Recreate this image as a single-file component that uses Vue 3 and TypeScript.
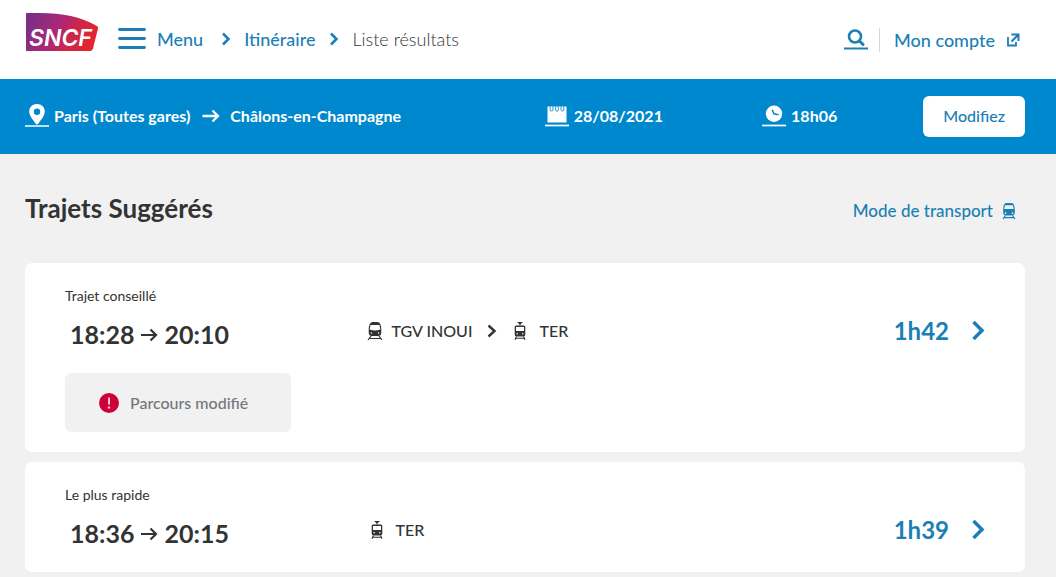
<script setup lang="ts">
type Mode = 'tgv' | 'ter'

interface Leg {
  mode: Mode
  label: string
}

interface Journey {
  id: number
  tag: string
  departure: string
  arrival: string
  legs: Leg[]
  duration: string
  notice?: string
}

const journeys: Journey[] = [
  {
    id: 1,
    tag: 'Trajet conseillé',
    departure: '18:28',
    arrival: '20:10',
    legs: [
      { mode: 'tgv', label: 'TGV INOUI' },
      { mode: 'ter', label: 'TER' },
    ],
    duration: '1h42',
    notice: 'Parcours modifié',
  },
  {
    id: 2,
    tag: 'Le plus rapide',
    departure: '18:36',
    arrival: '20:15',
    legs: [{ mode: 'ter', label: 'TER' }],
    duration: '1h39',
  },
]
</script>

<template>
  <div class="page">
    <header class="header">
      <a class="logo" href="#" aria-label="SNCF">
        <svg width="74" height="38" viewBox="0 0 74 38">
          <defs>
            <linearGradient id="brand" x1="0" y1="0.3" x2="1" y2="0.6">
              <stop offset="0" stop-color="#7a2f86" />
              <stop offset="0.4" stop-color="#a82878" />
              <stop offset="0.7" stop-color="#cf2647" />
              <stop offset="1" stop-color="#e5252b" />
            </linearGradient>
          </defs>
          <path d="M1 0H14C38 0 56 4 71 12.500Q73.500 13.500 73 15.500L68 35.500Q67.300 38 65 38H1Z" fill="url(#brand)" />
          <text x="4" y="33" class="logo-text">SNCF</text>
        </svg>
      </a>

      <nav class="crumbs" aria-label="Fil d'Ariane">
        <button class="menu" type="button">
          <svg width="28" height="22" viewBox="0 0 28 22" class="line">
            <path d="M1.500 1.500H26.500M1.500 10.500H26.500M1.500 19.500H26.500" stroke-width="2.800" stroke-linecap="round" />
          </svg>
          <span>Menu</span>
        </button>
        <svg class="line sep" width="10" height="14" viewBox="0 0 10 14">
          <path d="M2 1.500L7.500 7L2 12.500" stroke-width="2.500" />
        </svg>
        <a href="#">Itinéraire</a>
        <svg class="line sep" width="10" height="14" viewBox="0 0 10 14">
          <path d="M2 1.500L7.500 7L2 12.500" stroke-width="2.500" />
        </svg>
        <span class="current">Liste résultats</span>
      </nav>

      <div class="tools">
        <button class="search" type="button" aria-label="Rechercher">
          <svg class="line" width="24" height="21" viewBox="0 0 24 21">
            <circle cx="11" cy="7.500" r="6" stroke-width="2.600" />
            <path d="M15.500 12L19 15.500" stroke-width="3" stroke-linecap="round" />
            <path d="M0 19.500H24" stroke-width="2" />
          </svg>
        </button>
        <a class="account" href="#">
          <span>Mon compte</span>
          <svg class="line" width="14" height="14" viewBox="0 0 14 14">
            <path d="M2 4V12.500H10V9" stroke-width="1.800" />
            <path d="M5.500 1.500H12.500V8M12 2L5.500 8.500" stroke-width="2" />
          </svg>
        </a>
      </div>
    </header>

    <section class="query" aria-label="Votre recherche">
      <div class="place">
        <svg width="24" height="24" viewBox="0 0 24 24">
          <path fill-rule="evenodd" fill="#fff" d="M12 0C16.500 0 19.800 3.300 19.800 7.600C19.800 12 15.500 16.500 13.500 19.400Q12 21.500 10.500 19.400C8.500 16.500 4.200 12 4.200 7.600C4.200 3.300 7.500 0 12 0ZM12 4.500A3.200 3.200 0 1 0 12 10.900A3.200 3.200 0 1 0 12 4.500Z" />
          <path d="M0 22H24" stroke="#fff" stroke-width="1.500" />
        </svg>
        <span>Paris (Toutes gares)</span>
        <svg class="line" width="18" height="14" viewBox="0 0 18 14">
          <path d="M0.500 7H16M10.500 1.500L16 7L10.500 12.500" stroke-width="2.300" />
        </svg>
        <span>Châlons-en-Champagne</span>
      </div>
      <div class="item">
        <svg width="24" height="22" viewBox="0 0 24 22">
          <path fill="#fff" d="M2.500 1.500H21.500V17.500H2.500Z" />
          <g fill="#fff" stroke="#0088ce" stroke-width="0.900">
            <rect x="5.200" y="1" width="2.800" height="5" rx="1.200" />
            <rect x="10.600" y="1" width="2.800" height="5" rx="1.200" />
            <rect x="16" y="1" width="2.800" height="5" rx="1.200" />
          </g>
          <path d="M0 20.500H24" stroke="#fff" stroke-width="1.700" />
        </svg>
        <span>28/08/2021</span>
      </div>
      <div class="item">
        <svg width="24" height="22" viewBox="0 0 24 22">
          <circle cx="12" cy="8.800" r="8.200" fill="#fff" />
          <path d="M10.200 4.800L11.800 8.800L16.500 9.800" fill="none" stroke="#0088ce" stroke-width="1.500" />
          <path d="M0 20.500H24" stroke="#fff" stroke-width="1.700" />
        </svg>
        <span>18h06</span>
      </div>
      <button class="edit" type="button">Modifiez</button>
    </section>

    <main class="results">
      <div class="heading">
        <h1>Trajets Suggérés</h1>
        <a class="mode" href="#">
          <span>Mode de transport</span>
          <svg width="14" height="18" viewBox="0 0 14 18" fill="currentColor">
            <path fill-rule="evenodd" d="M4 1H10Q12.800 1.500 12.800 8V10.500Q12.800 13.500 10 13.500H4Q1.200 13.500 1.200 10.500V8Q1.200 1.500 4 1ZM3 3.200L2.300 7H11.700L11 3.200ZM3.500 10.200A0.900 0.900 0 1 0 3.500 12A0.900 0.900 0 1 0 3.500 10.200ZM10.500 10.200A0.900 0.900 0 1 0 10.500 12A0.900 0.900 0 1 0 10.500 10.200Z" />
            <path d="M3.500 13.500L1 17M10.500 13.500L13 17M2 15.700H12" stroke="currentColor" stroke-width="1.200" />
          </svg>
        </a>
      </div>

      <ul class="list">
        <li v-for="journey in journeys" :key="journey.id" class="card">
          <div class="when">
            <p class="tag">{{ journey.tag }}</p>
            <p class="times">
              <span>{{ journey.departure }}</span>
              <svg class="line" width="18" height="16" viewBox="0 0 18 16">
                <path d="M1 9H16M10.500 3.500L16 9L10.500 14.500" stroke-width="2.200" />
              </svg>
              <span>{{ journey.arrival }}</span>
            </p>
          </div>

          <div class="legs">
            <template v-for="(leg, index) in journey.legs" :key="index">
              <svg v-if="index > 0" class="line leg-sep" width="10" height="14" viewBox="0 0 10 14">
                <path d="M1.500 1.500L7.500 7L1.500 12.500" stroke-width="2.400" />
              </svg>
              <span class="leg">
                <svg v-if="leg.mode === 'tgv'" width="18" height="20" viewBox="0 0 18 20" fill="currentColor">
                  <path fill-rule="evenodd" d="M6 1H12Q15.300 2 15.300 9V11.500Q15.300 15 12 15H6Q2.700 15 2.700 11.500V9Q2.700 2 6 1ZM4.500 4L3.700 8.500Q9 10.500 14.300 8.500L13.500 4ZM5.400 11.200A0.800 0.800 0 1 0 5.400 12.800A0.800 0.800 0 1 0 5.400 11.200ZM12.600 11.200A0.800 0.800 0 1 0 12.600 12.800A0.800 0.800 0 1 0 12.600 11.200Z" />
                  <path d="M5 15L2 19M13 15L16 19M3.500 17.500H14.500" stroke="currentColor" stroke-width="1.200" />
                </svg>
                <svg v-else width="22" height="20" viewBox="0 0 22 20" fill="currentColor">
                  <path fill-rule="evenodd" d="M7 4.500H15Q16.300 4.500 16.300 6V13.500Q16.300 15.500 14.500 15.500H7.500Q5.700 15.500 5.700 13.500V6Q5.700 4.500 7 4.500ZM7 6V10H15V6ZM8.200 12A0.800 0.800 0 1 0 8.200 13.600A0.800 0.800 0 1 0 8.200 12ZM13.800 12A0.800 0.800 0 1 0 13.800 13.600A0.800 0.800 0 1 0 13.800 12Z" />
                  <path d="M8.500 1.500H13.500M9.500 1.500L11 3L12.500 1.500M11 3V4.500M7.500 15.500L6 18.700M14.500 15.500L16 18.700M6 17.300H16" fill="none" stroke="currentColor" stroke-width="1.100" />
                </svg>
                <span>{{ leg.label }}</span>
              </span>
            </template>
          </div>

          <a class="duration" href="#">
            <span>{{ journey.duration }}</span>
            <svg class="line" width="14" height="22" viewBox="0 0 14 22">
              <path d="M2.500 2L11 10.500L2.500 19" stroke-width="3.500" />
            </svg>
          </a>

          <p v-if="journey.notice" class="notice">
            <svg width="20" height="20" viewBox="0 0 20 20">
              <circle cx="10" cy="10" r="10" fill="#cd0037" />
              <path d="M10 4.500V11.500" stroke="#f6c9d5" stroke-width="2" />
              <circle cx="10" cy="14.500" r="1.200" fill="#f6c9d5" />
            </svg>
            <span>{{ journey.notice }}</span>
          </p>
        </li>
      </ul>
    </main>
  </div>
</template>

<style>
body {
  margin: 0;
  background: #f1f1f1;
}
</style>

<style scoped>
.page {
  font-family: Lato, "Open Sans", sans-serif;
  font-size: 16px;
  line-height: 24px;
  color: #333;
}

svg {
  display: block;
  flex: none;
}

.line {
  fill: none;
  stroke: currentColor;
}

a {
  color: #1b7fb5;
  text-decoration: none;
}

button {
  border: 0;
  padding: 0;
  background: none;
  font: inherit;
  color: #1b7fb5;
  cursor: pointer;
}

.header {
  display: flex;
  align-items: center;
  box-sizing: border-box;
  height: 79px;
  padding: 0 36px 0 25px;
  background: #fff;
  font-size: 18px;
  font-weight: 500;
}

.logo {
  margin: 0 19px 16px 0;
}

.logo-text {
  font: italic 600 23px Inter, sans-serif;
  fill: #fff;
}

.crumbs {
  display: flex;
  align-items: center;
  padding-bottom: 2px;
  color: #1b7fb5;
}

.menu {
  display: flex;
  align-items: center;
  gap: 11px;
  margin-right: 4px;
}

.sep {
  margin: 0 13px 0 14px;
}

.current {
  color: #333;
  font-weight: 300;
}

.tools {
  display: flex;
  align-items: center;
  margin-left: auto;
}

.search {
  padding-right: 11px;
}

.account {
  display: flex;
  align-items: center;
  gap: 11px;
  padding-left: 14px;
  border-left: 1px solid #d7d7d7;
}

.query {
  display: grid;
  grid-template-columns: 519fr 217fr 161fr auto;
  align-items: center;
  padding: 17px 31px 17px 25px;
  background: #0088ce;
  color: #fff;
  font-weight: 700;
}

.place,
.item {
  display: flex;
  align-items: center;
  gap: 5px;
  padding-bottom: 2px;
}

.place .line {
  margin: 0 5px 0 7px;
}

.edit {
  height: 41px;
  padding: 0 20px 2px;
  border-radius: 6px;
  background: #fff;
  font-weight: 500;
}

.results {
  padding: 39px 31px 5px 25px;
}

.heading {
  display: flex;
  align-items: flex-start;
  justify-content: space-between;
  margin-bottom: 40px;
}

h1 {
  margin: 0;
  font-size: 26px;
  line-height: 30px;
  font-weight: 700;
}

.mode {
  display: flex;
  align-items: center;
  gap: 9px;
  padding: 6px 9px 0 0;
  font-size: 17px;
  font-weight: 500;
}

.list {
  display: grid;
  gap: 10px;
  margin: 0;
  padding: 0;
  list-style: none;
}

.card {
  display: grid;
  grid-template-columns: 300fr 527fr auto;
  align-items: center;
  padding: 20px 40px;
  border-radius: 7px;
  background: #fff;
}

.tag,
.times,
.notice {
  margin: 0;
}

.when {
  padding: 1px 0;
}

.tag {
  font-size: 14px;
}

.times {
  display: flex;
  align-items: center;
  gap: 6px;
  margin-top: 8px;
  padding-left: 5px;
  font-size: 25px;
  line-height: 36px;
  font-weight: 700;
}

.legs,
.leg,
.duration,
.notice {
  display: flex;
  align-items: center;
}

.legs,
.duration {
  padding-top: 26px;
}

.legs {
  font-weight: 500;
}

.leg {
  gap: 8px;
}

.leg-sep {
  margin: 0 12px 0 15px;
}

.duration {
  gap: 22px;
  font-size: 24px;
  font-weight: 700;
}

.notice {
  grid-column: 1;
  justify-self: start;
  gap: 11px;
  box-sizing: border-box;
  height: 59px;
  margin-top: 20px;
  padding: 0 43px 0 34px;
  border-radius: 6px;
  background: #f1f1f1;
  color: #747678;
  font-weight: 500;
}
</style>
